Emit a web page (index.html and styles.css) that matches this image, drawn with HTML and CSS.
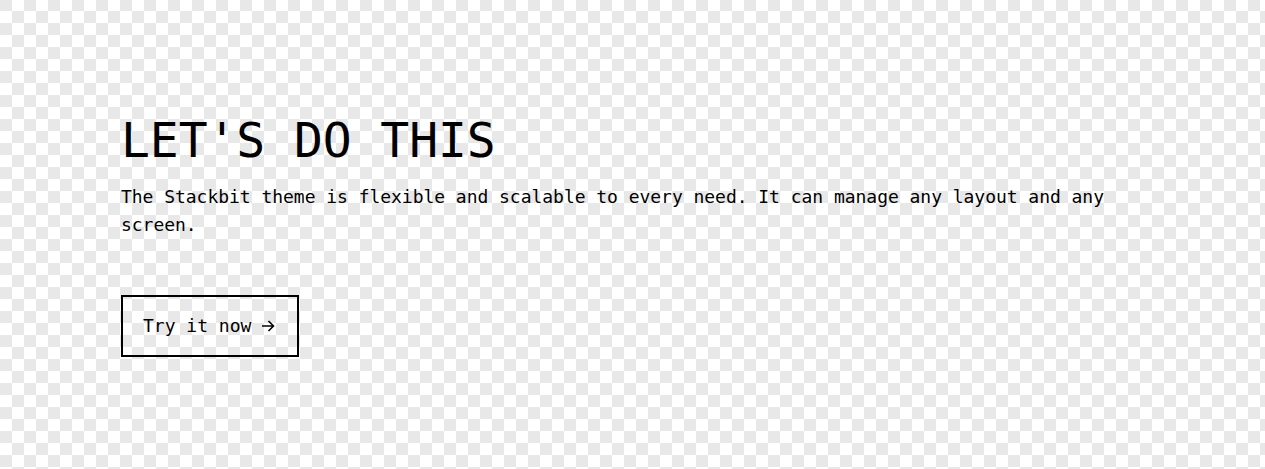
FILE: index.html
```html
<!DOCTYPE html>
<html lang="en">
<head>
<meta charset="utf-8">
<title>Let's do this</title>
<link rel="stylesheet" href="styles.css">
</head>
<body>
<section class="cta">
  <div class="cta-inner">
    <h2 class="cta-title">LET'S DO THIS</h2>
    <p class="cta-text">The Stackbit theme is flexible and scalable to every need. It can manage any layout and any screen.</p>
    <div class="cta-actions">
      <a class="btn" href="#">Try it now <svg class="btn-arrow" width="14" height="12" viewBox="0 0 14 12" aria-hidden="true"><path d="M1 6h11.5M7.5 1l5 5-5 5" fill="none" stroke="#000" stroke-width="1.6"/></svg></a>
    </div>
  </div>
</section>
</body>
</html>
```
FILE: styles.css
```css
html, body {
  margin: 0;
  padding: 0;
}
body {
  min-height: 469px;
  background-color: #ffffff;
  background-image:
    conic-gradient(#e8e8e8 25%, transparent 0 50%, #e8e8e8 0 75%, transparent 0);
  background-size: 24px 24px;
  background-position: 12px -1px;
  font-family: "DejaVu Sans Mono", "Liberation Mono", monospace;
  color: #000;
}
.cta {
  padding: 112px 121px 0 121px;
}
.cta-inner {
  max-width: 1010px;
}
.cta-title {
  margin: 0;
  font-weight: 400;
  font-size: 48px;
  line-height: 56px;
  letter-spacing: -0.08px;
}
.cta-text {
  margin: 15px 0 0 0;
  font-size: 18px;
  line-height: 28px;
  letter-spacing: -0.035px;
}
.cta-actions {
  margin-top: 56px;
}
.btn {
  display: inline-flex;
  align-items: center;
  gap: 10px;
  border: 2px solid #000;
  padding: 16px 22px 16px 20px;
  font-size: 18px;
  line-height: 26px;
  color: #000;
  text-decoration: none;
}
.btn-arrow {
  display: block;
}
```
